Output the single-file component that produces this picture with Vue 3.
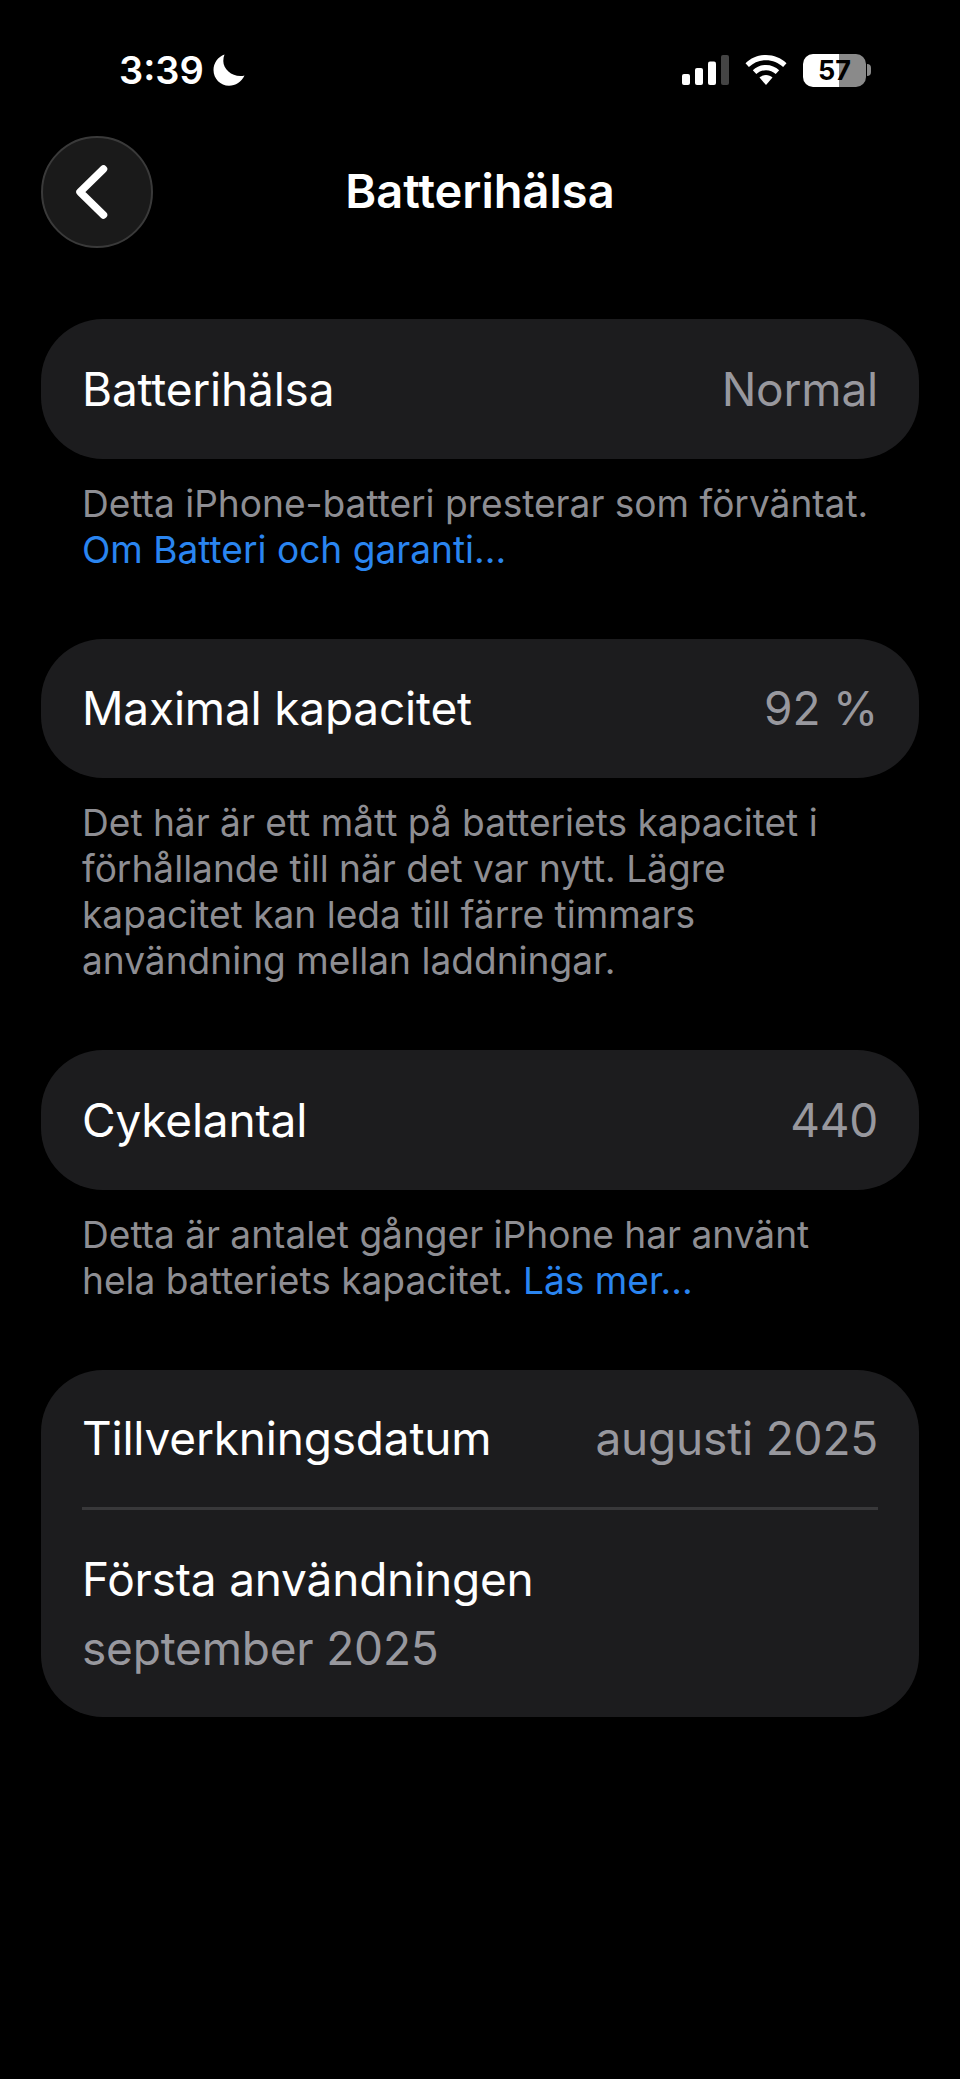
<template>
  <div class="screen">
    <!-- statusrad -->
    <div class="status-bar">
      <div class="status-left">
        <span class="time">3:39</span>
        <svg class="moon" viewBox="0 0 32 32" width="32" height="32">
          <path d="M11.500 0.500C4.900 2.800 0.500 9 0.500 16c0 8.800 7 15.800 15.500 15.800 6.600 0 12.600-3.800 15.500-10.300-1.100.4-2.600.6-4.200.6C18.400 22.100 10.300 14.800 10.300 7c0-2.400.4-4.500 1.200-6.500z" fill="#fff" />
        </svg>
      </div>
      <div class="status-right">
        <svg class="signal" viewBox="0 0 47 30" width="47" height="30">
          <rect x="0" y="19" width="8" height="11" rx="2" fill="#fff" />
          <rect x="13" y="13" width="8" height="17" rx="2" fill="#fff" />
          <rect x="26" y="6.500" width="8" height="23.500" rx="2" fill="#fff" />
          <rect x="39" y="0" width="8" height="30" rx="2" fill="#444" />
        </svg>
        <svg class="wifi" viewBox="0 0 42 30" width="42" height="30">
          <path d="M21 0C13 0 6 3 0.500 8.200l3.400 3.900C8.500 7.700 14.500 5.200 21 5.200s12.500 2.500 17.100 6.900l3.400-3.900C36 3 29 0 21 0z" fill="#fff" />
          <path d="M21 10c-5 0-9.700 2-13.200 5.200l3.500 3.900c2.600-2.400 6-3.900 9.700-3.900s7.100 1.500 9.700 3.900l3.500-3.900C30.700 12 26 10 21 10z" fill="#fff" />
          <path d="M21 20c-2.500 0-4.800 1-6.500 2.500L21 30l6.500-7.500C25.800 21 23.500 20 21 20z" fill="#fff" />
        </svg>
        <div class="battery">
          <div class="battery-body"><span class="battery-level">57</span></div>
          <div class="battery-tip"></div>
        </div>
      </div>
    </div>

    <!-- navigering -->
    <div class="nav">
      <button class="back">
        <svg viewBox="0 0 34 56" width="34" height="56">
          <path d="M27.500 5 L4 28 L27.500 51" fill="none" stroke="#fff" stroke-width="7.500" stroke-linecap="round" stroke-linejoin="round" />
        </svg>
      </button>
      <div class="title">Batterihälsa</div>
    </div>

    <div class="list">
      <section v-for="s in sections" :key="s.label" class="section">
        <div class="card">
          <div class="row">
            <span class="label">{{ s.label }}</span>
            <span class="value">{{ s.value }}</span>
          </div>
        </div>
        <p class="footer">
          <template v-for="line in s.lines" :key="line"><span class="line">{{ line }}</span></template>
          <span v-if="s.lastLine" class="line">{{ s.lastLine }} <a class="link">{{ s.inlineLink }}</a></span>
          <a v-if="s.link" class="line link">{{ s.link }}</a>
        </p>
      </section>

      <div class="card">
        <div class="row first">
          <span class="label">Tillverkningsdatum</span>
          <span class="value">augusti 2025</span>
        </div>
        <div class="divider"></div>
        <div class="stack">
          <span class="label">Första användningen</span>
          <span class="value">september 2025</span>
        </div>
      </div>
    </div>
  </div>
</template>

<script setup>
const sections = [
  {
    label: 'Batterihälsa',
    value: 'Normal',
    lines: ['Detta iPhone-batteri presterar som förväntat.'],
    link: 'Om Batteri och garanti...'
  },
  {
    label: 'Maximal kapacitet',
    value: '92 %',
    lines: [
      'Det här är ett mått på batteriets kapacitet i',
      'förhållande till när det var nytt. Lägre',
      'kapacitet kan leda till färre timmars',
      'användning mellan laddningar.'
    ]
  },
  {
    label: 'Cykelantal',
    value: '440',
    lines: ['Detta är antalet gånger iPhone har använt'],
    lastLine: 'hela batteriets kapacitet.',
    inlineLink: 'Läs mer...'
  }
]
</script>

<style>
html,
body {
  background: #000;
}
</style>

<style scoped>
.screen {
  width: 960px;
  height: 2079px;
  background: #000;
  color: #fff;
  font-family: Inter, "Liberation Sans", sans-serif;
  overflow: hidden;
  box-sizing: border-box;
}

.status-bar {
  height: 136px;
  box-sizing: border-box;
  padding: 50px 89px 0 119px;
  display: flex;
  justify-content: space-between;
  align-items: flex-start;
}

.status-left {
  display: flex;
  align-items: center;
  gap: 9px;
  height: 40px;
}

.time {
  font-size: 38px;
  font-weight: 600;
  line-height: 40px;
}

.moon {
  display: block;
}

.status-right {
  display: flex;
  align-items: center;
  gap: 16px;
  height: 40px;
}

.signal,
.wifi {
  display: block;
}

.battery {
  display: flex;
  align-items: center;
  gap: 1px;
}

.battery-body {
  width: 63px;
  height: 33px;
  border-radius: 10px;
  background: linear-gradient(90deg, #fff 0 57%, #8a8a8a 57% 100%);
  display: flex;
  align-items: center;
  justify-content: center;
}

.battery-level {
  color: #000;
  font-size: 27px;
  font-weight: 700;
  line-height: 33px;
}

.battery-tip {
  width: 4px;
  height: 12px;
  border-radius: 0 4px 4px 0;
  background: #8a8a8a;
}

.nav {
  position: relative;
  height: 112px;
  margin: 0 41px;
  display: flex;
  align-items: center;
  justify-content: center;
}

.back {
  position: absolute;
  left: 0;
  top: 0;
  width: 112px;
  height: 112px;
  padding: 0 8px 0 0;
  border-radius: 50%;
  border: 2px solid #3a3a3a;
  background: #1a1a1a;
  display: flex;
  align-items: center;
  justify-content: center;
  box-sizing: border-box;
}

.title {
  font-size: 47px;
  font-weight: 600;
  margin-bottom: 3px;
}

.list {
  padding: 71px 41px 0;
}

.card {
  background: #1c1c1e;
  border-radius: 62px;
  padding: 0 41px;
}

.row {
  height: 139.500px;
  display: flex;
  align-items: center;
  justify-content: space-between;
}

.row.first {
  height: 137.500px;
}

.label {
  font-size: 46px;
  color: #fff;
  letter-spacing: -0.2px;
}

.value {
  font-size: 46px;
  color: #98989e;
  letter-spacing: -0.2px;
}

.footer {
  margin: 0;
  padding: 22px 41px 66px;
  font-size: 37.100px;
  line-height: 46px;
  color: #8e8e93;
}

.line {
  display: block;
  white-space: nowrap;
}

.link {
  color: #2a85f0;
}

a.link:not(.line) {
  display: inline;
}

.divider {
  height: 3px;
  background: #38383a;
}

.stack {
  height: 207px;
  display: flex;
  flex-direction: column;
  justify-content: center;
  gap: 13px;
}
</style>
